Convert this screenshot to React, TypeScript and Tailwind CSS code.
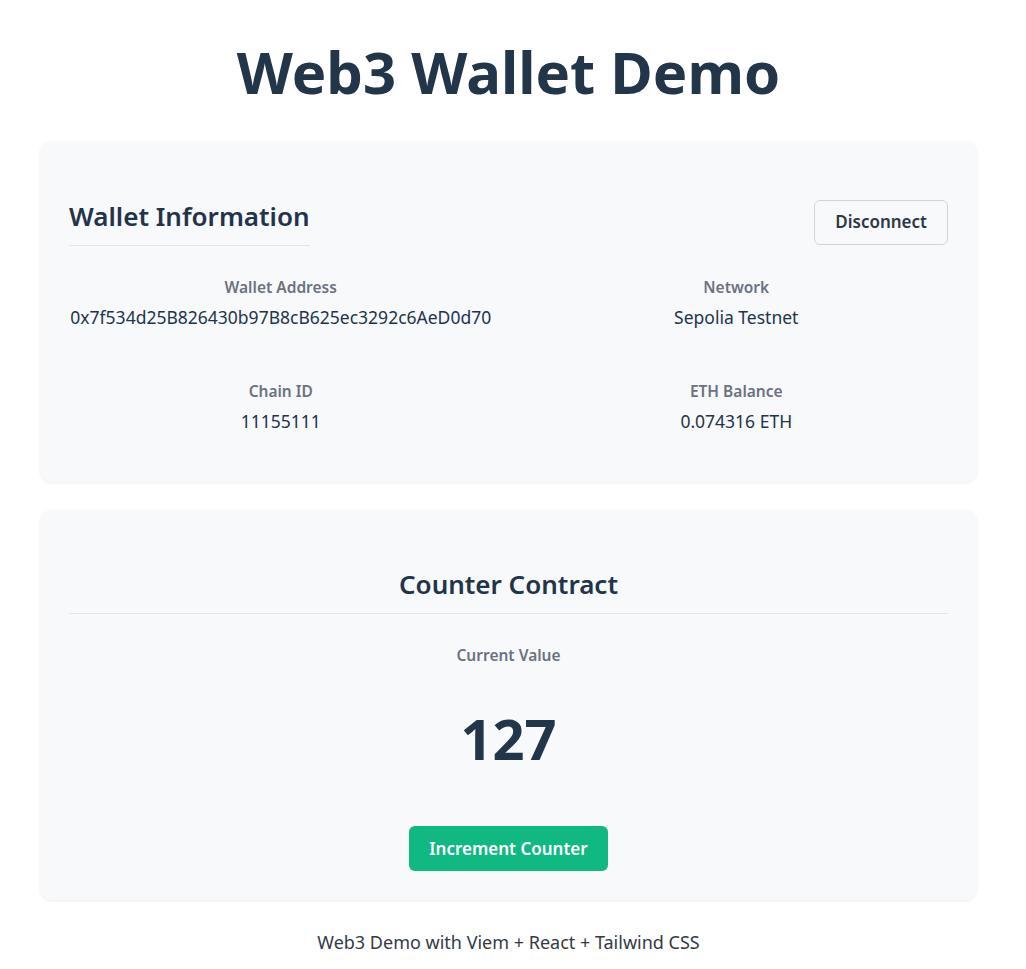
import React, { useState } from 'react';

const WALLET = '0x7f534d25B826430b97B8cB625ec3292c6AeD0d70';

function InfoItem({ label, value }: { label: string; value: string }) {
  return (
    <div className="text-center">
      <div className="text-[15.5px] font-semibold text-[#6b7280] leading-5 mb-[8px]">{label}</div>
      <div className="text-[17.5px] text-[#22344a] leading-6 break-all">{value}</div>
    </div>
  );
}

export default function App() {
  const [count, setCount] = useState(127);

  return (
    <div className="min-h-screen bg-white font-['Noto_Sans',sans-serif] text-[#22344a]">
      <div className="w-[937px] ml-[40px] pt-[34px]">
        <h1 className="text-[58px] font-bold leading-[76px] text-center text-[#233548] mb-[31px]">
          Web3 Wallet Demo
        </h1>

        <div className="bg-[#f8f9fb] rounded-xl shadow-[0_1px_3px_rgba(0,0,0,0.08)] px-[29px] pt-[57px] pb-[49px] mb-[28px]">
          <div className="flex items-center justify-between mb-[31px]">
            <h2 className="text-[26px] font-semibold leading-[36px] pb-[11px] border-b border-[#e3e5e8]">
              Wallet Information
            </h2>
            <button className="px-5 h-[45px] border border-[#d1d5db] rounded-md text-[17px] font-semibold text-[#2d3748] bg-[#f8f9fb]">
              Disconnect
            </button>
          </div>
          <div className="grid grid-cols-2 gap-x-8 gap-y-[52px]">
            <InfoItem label="Wallet Address" value={WALLET} />
            <InfoItem label="Network" value="Sepolia Testnet" />
            <InfoItem label="Chain ID" value="11155111" />
            <InfoItem label="ETH Balance" value="0.074316 ETH" />
          </div>
        </div>

        <div className="bg-[#f8f9fb] rounded-xl shadow-[0_1px_3px_rgba(0,0,0,0.08)] px-[29px] pt-[55px] pb-[29px]">
          <h2 className="text-[26px] font-semibold leading-[38px] text-center pb-[10px] border-b border-[#e3e5e8] mb-[31px]">
            Counter Contract
          </h2>
          <div className="text-center">
            <div className="text-[15.5px] font-semibold text-[#6b7280] leading-5">Current Value</div>
            <div className="text-[56px] font-bold leading-[56px] text-[#233548] mt-[45px] mb-[60px]">{count}</div>
            <button
              onClick={() => setCount(count + 1)}
              className="h-[45px] px-5 bg-[#10b981] text-white text-[17px] font-semibold rounded-md"
            >
              Increment Counter
            </button>
          </div>
        </div>

        <div className="text-center text-[18px] leading-6 text-[#333a44] pt-[30px] pb-4">
          Web3 Demo with Viem + React + Tailwind CSS
        </div>
      </div>
    </div>
  );
}
